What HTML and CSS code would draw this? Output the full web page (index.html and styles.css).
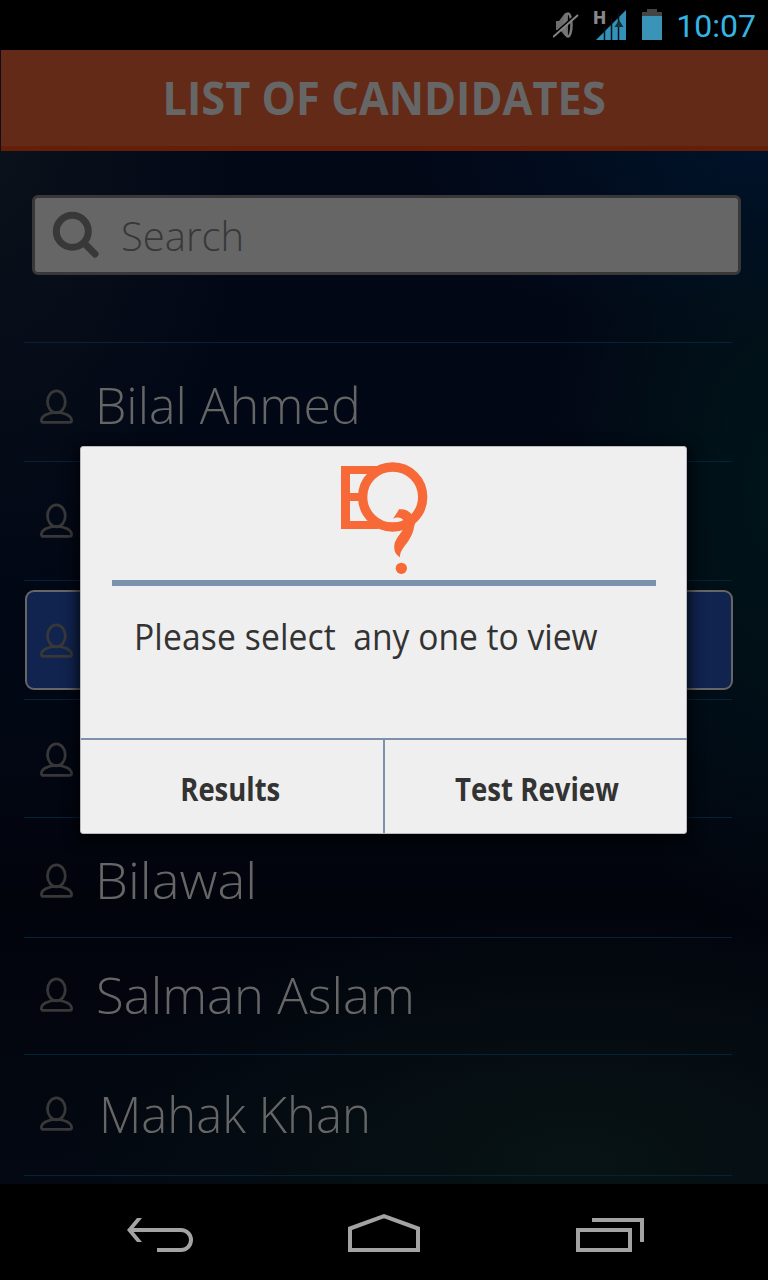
FILE: index.html
```html
<!DOCTYPE html>
<html lang="en">
<head>
<meta charset="utf-8">
<title>List of Candidates</title>
<link rel="stylesheet" href="styles.css">
</head>
<body>
<svg class="defs" aria-hidden="true">
  <symbol id="user" viewBox="0 0 34 36">
    <ellipse cx="16.400" cy="12.800" rx="8.900" ry="11"/>
    <path d="M1.400 31.500C1.400 27 8 23.400 16.400 23.400S31.600 27 31.600 31.500c0 1.200-.7 1.900-2 1.900H3.400c-1.300 0-2-.7-2-1.900Z"/>
  </symbol>
</svg>
<div class="screen">
  <header class="status">
    <svg class="mute" width="26" height="30" viewBox="0 0 26 30">
      <path d="M3 11h3l6-8h3v23h-3l-5-6H3Z" fill="#6c6c6c"/>
      <ellipse cx="15" cy="15" rx="3.500" ry="11.500" fill="none" stroke="#777" stroke-width="2.500"/>
      <path d="M0 25 25 3" stroke="#000" stroke-width="2"/>
      <path d="M0 27 25 5" stroke="#858585" stroke-width="2"/>
    </svg>
    <div class="network">
      <svg width="34" height="31" viewBox="0 0 34 31">
        <path d="M3 31 33 1V31Z" fill="#3492b9"/>
        <path d="M11.500 18v13M18.500 10v21M25.500 4v27" stroke="#061219" stroke-width="1.500"/>
        <path d="m26 11 4.500 7h-9Z" fill="#14323e"/>
      </svg>
      <span class="network-type">H</span>
    </div>
    <svg class="battery" width="20" height="31" viewBox="0 0 20 31">
      <path d="M5 0h10v3h5v4H0V3h5Z" fill="#444"/>
      <path d="M0 7h20v24H0Z" fill="#3a94b8"/>
    </svg>
    <span class="clock">10:07</span>
  </header>

  <main class="app">
    <h1 class="title"><span>LIST OF CANDIDATES</span></h1>
    <div class="search">
      <svg width="48" height="48" viewBox="0 0 48 48" fill="none" stroke="#383838">
        <circle cx="20.300" cy="20.300" r="16" stroke-width="7"/>
        <path d="m32 32 11 11" stroke-width="7" stroke-linecap="round"/>
      </svg>
      <span class="placeholder">Search</span>
    </div>
    <ul class="list">
      <li class="row r1"><svg class="user"><use href="#user"/></svg><span class="name">Bilal Ahmed</span></li>
      <li class="row r2"><svg class="user"><use href="#user"/></svg></li>
      <li class="row r3"><div class="selected"><svg class="user"><use href="#user"/></svg></div></li>
      <li class="row r4"><svg class="user"><use href="#user"/></svg></li>
      <li class="row r5"><svg class="user"><use href="#user"/></svg><span class="name">Bilawal</span></li>
      <li class="row r6"><svg class="user"><use href="#user"/></svg><span class="name">Salman Aslam</span></li>
      <li class="row r7"><svg class="user"><use href="#user"/></svg><span class="name">Mahak Khan</span></li>
    </ul>
  </main>

  <nav class="navbar">
    <svg width="68" height="38" viewBox="0 0 68 38" fill="none" stroke="#a3a3a3" stroke-width="4">
      <path d="M4 14h51a10 10 0 0 1 0 20H31"/>
      <path d="M1 14 11 2h5L6 14l10 12h-5Z" fill="#a3a3a3" stroke="none"/>
    </svg>
    <svg width="72" height="38" viewBox="0 0 72 38" fill="none" stroke="#a3a3a3" stroke-width="4">
      <path d="M2 34V12.500L36 0.200 70 12.500V34Z"/>
    </svg>
    <svg width="68" height="38" viewBox="0 0 68 38" fill="none" stroke="#a3a3a3" stroke-width="4">
      <path d="M2 14h52v20H2ZM16 4h50v22"/>
    </svg>
  </nav>

  <section class="dialog" role="dialog">
    <div class="dialog-body">
      <svg class="logo" width="88" height="112" viewBox="63 36 264 336" fill="#f76937">
        <path d="M63 48h112v24H90v57h30v24H90v60h85v24H63Z"/>
        <circle cx="218" cy="141" r="90" fill="none" stroke="#f76937" stroke-width="28"/>
        <path d="M219 206C224 200 232 187 237 178C252 176 266 181 275 193L289 214C278 232 287 239 265 273C250 294 240 303 240 322C225 314 220 297 224 280C229 262 244 249 250 236L253 214C248 203 232 199 219 206Z"/>
        <circle cx="244" cy="355" r="17"/>
      </svg>
      <div class="rule"></div>
      <p class="message"><span>Please select</span>&nbsp; any one to view</p>
    </div>
    <div class="actions">
      <button class="action"><span class="results">Results</span></button>
      <button class="action"><span class="review">Test Review</span></button>
    </div>
  </section>
</div>
</body>
</html>
```
FILE: styles.css
```css
* { box-sizing: border-box; }
body { margin: 0; background: #000; font-family: "Open Sans", "Noto Sans", sans-serif; }
.defs { display: none; }
.screen { position: relative; width: 768px; height: 1280px; display: flex; flex-direction: column; overflow: hidden; }
.status { height: 50px; flex: none; display: flex; align-items: flex-start; justify-content: flex-end; padding: 9px 12px 0 0; background: #000; }
.mute { margin: 1px 14px 0 0; }
.network { position: relative; width: 34px; margin-right: 15px; height: 31px; }
.network-type { position: absolute; left: 0; top: 0; font: 900 18px/18px Roboto, sans-serif; color: #888; }
.battery { margin-right: 15px; }
.clock { margin-left: -1px; font: 400 32px/34px Roboto, sans-serif; color: #33b5e5; }
.app {
  height: 1134px; flex: none;
  background:
    radial-gradient(ellipse 360px 200px at 100% 8%, #00132a 0%, transparent 100%),
    radial-gradient(ellipse 240px 440px at 102% 39%, #001519 0%, transparent 100%),
    radial-gradient(ellipse 520px 250px at 75% 98%, #071314 0%, transparent 100%),
    radial-gradient(ellipse 240px 460px at 0 8%, #0a111a 0%, transparent 100%),
    linear-gradient(#020817, #020714 60%, #02040c 75%, #030812);
}
.title { margin: 0 0 0 1px; height: 101px; background: #642a18; border-bottom: 5px solid #651f08; color: #666; text-align: center; font-size: 46px; line-height: 94px; font-weight: 700; white-space: nowrap; }
.title span, .placeholder, .name, .message, .results, .review { display: inline-block; white-space: nowrap; }
.title span { transform: scaleX(.943); }
.search { margin: 44px 27px 0 32px; height: 80px; border: 3px solid #383838; border-radius: 6px; background: #666; display: flex; align-items: center; padding-left: 17px; }
.placeholder { margin: 2px 0 0 21px; color: #383838; font-size: 40px; font-weight: 300; line-height: 60px; }
.list { list-style: none; margin: 67px 36px 0 24px; padding: 0; border-top: 1px solid #04223a; }
.row { height: 119px; border-bottom: 1px solid #04223a; display: flex; align-items: center; padding-left: 16px; }
.user { width: 34px; height: 36px; flex: none; fill: none; stroke: #383838; stroke-width: 2.8; }
.name { margin-left: 21px; color: #666; font-size: 50px; line-height: 60px; font-weight: 300; transform-origin: left center; }
.r1 { padding-top: 9px; }
.r1 .name { margin-bottom: 4px; }
.r3 { padding: 0 0 0 1px; }
.selected { flex: none; width: 708px; height: 100px; border: 2px solid #666; border-radius: 9px; background: #11234f; display: flex; align-items: center; padding: 2px 0 0 13px; }
.r4 { height: 118px; padding-top: 3px; }
.r5 { height: 120px; padding-top: 6px; }
.r5 .name { margin-bottom: 2px; transform: scaleX(1.05); }
.r6 { height: 117px; padding-bottom: 3px; }
.r6 .name { margin-left: 22px; transform: scaleX(1.017); }
.r7 { height: 121px; padding-bottom: 3px; }
.r7 .name { margin-left: 25px; transform: scaleX(.98); }
.navbar { height: 96px; background: #000; display: flex; justify-content: space-between; align-items: center; padding: 6px 124px 0 126px; }
.navbar svg { overflow: visible; }
.navbar svg:nth-child(2) { margin-right: 2px; }
.dialog { position: absolute; left: 80px; top: 446px; width: 607px; height: 388px; background: #efefef; border: 1px solid #b9bbc0; border-radius: 3px; box-shadow: 0 4px 14px 3px rgba(0,0,0,.75); display: flex; flex-direction: column; }
.dialog-body { flex: 1; padding: 15px 30px 0 31px; }
.logo { display: block; margin: 0 auto 6px 229px; }
.rule { height: 6px; background: #7c91ac; }
.message { margin: 25px 0 0 22px; color: #333; font-size: 37px; line-height: 50px; font-weight: 400; transform: scaleX(.908); transform-origin: left center; }
.message span { letter-spacing: .15px; }
.actions { height: 95px; margin-right: -1px; border-top: 2px solid #7c91ac; display: grid; grid-template-columns: 302px 1fr; }
.action { border: 0; padding: 5px 0 0; background: none; color: #333; font: 700 32px/42px "Open Sans", "Noto Sans", sans-serif; }
.action + .action { border-left: 2px solid #7c91ac; padding-left: 2px; }
.results { transform: translateX(-2px) scaleX(.858); }
.review { transform: scaleX(.862); }
```
